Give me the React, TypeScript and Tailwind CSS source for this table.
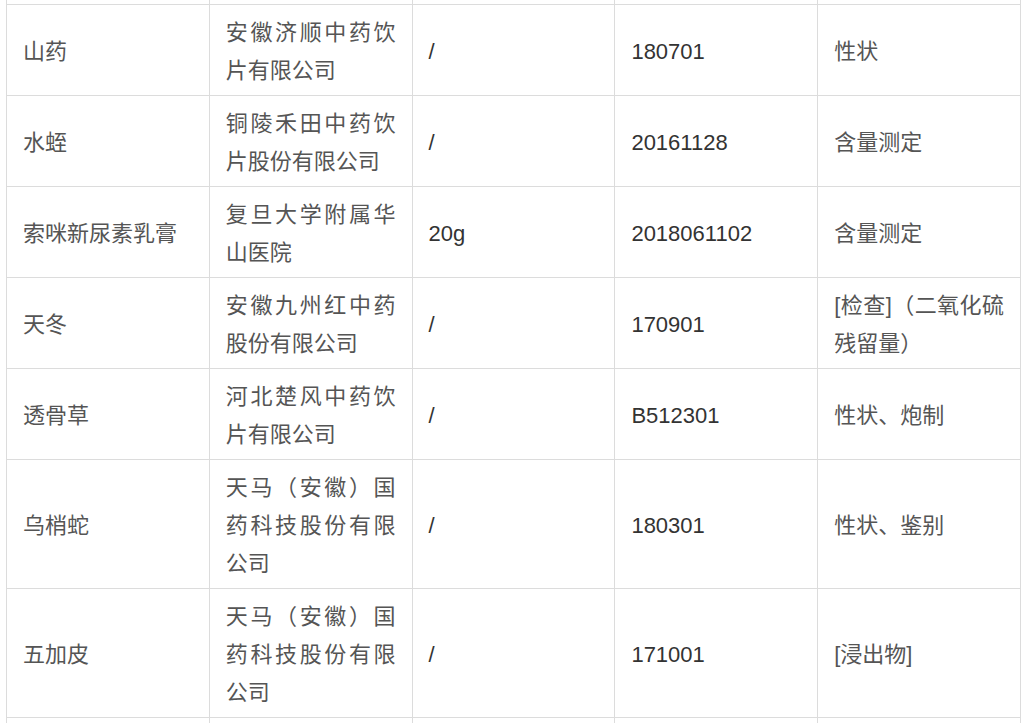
const rows: { name: string; maker: string; spec: string; batch: string; item: string }[] = [
  { name: "山药", maker: "安徽济顺中药饮片有限公司", spec: "/", batch: "180701", item: "性状" },
  { name: "水蛭", maker: "铜陵禾田中药饮片股份有限公司", spec: "/", batch: "20161128", item: "含量测定" },
  { name: "索咪新尿素乳膏", maker: "复旦大学附属华山医院", spec: "20g", batch: "2018061102", item: "含量测定" },
  { name: "天冬", maker: "安徽九州红中药股份有限公司", spec: "/", batch: "170901", item: "[检查]（二氧化硫残留量）" },
  { name: "透骨草", maker: "河北楚风中药饮片有限公司", spec: "/", batch: "B512301", item: "性状、炮制" },
  { name: "乌梢蛇", maker: "天马（安徽）国药科技股份有限公司", spec: "/", batch: "180301", item: "性状、鉴别" },
  { name: "五加皮", maker: "天马（安徽）国药科技股份有限公司", spec: "/", batch: "171001", item: "[浸出物]" },
];

const cell =
  "border border-[#dcdcdc] px-4 pt-[9px] pb-[5px] align-middle text-justify break-all";
const cjk = cell + " text-[#555]";

export default function App() {
  return (
    <div
      className="h-[723px] overflow-hidden bg-white px-[6px] text-[22px] leading-[38px] text-[#333]"
      style={{ fontFamily: '"Liberation Sans", "Noto Sans CJK SC", sans-serif' }}
    >
      <table className="w-full table-fixed border-collapse">
        <tbody>
          <tr>
            {[0, 1, 2, 3, 4].map((i) => (
              <td key={i} className="h-[4px] border-x border-b border-[#dcdcdc] p-0" />
            ))}
          </tr>
          {rows.map((r) => (
            <tr key={r.name}>
              <td className={cjk}>{r.name}</td>
              <td className={cjk}>{r.maker}</td>
              <td className={cell}>{r.spec}</td>
              <td className={cell}>{r.batch}</td>
              <td className={cjk}>{r.item}</td>
            </tr>
          ))}
          <tr>
            {[0, 1, 2, 3, 4].map((i) => (
              <td key={i} className={cell + " h-[91px]"} />
            ))}
          </tr>
        </tbody>
      </table>
    </div>
  );
}
